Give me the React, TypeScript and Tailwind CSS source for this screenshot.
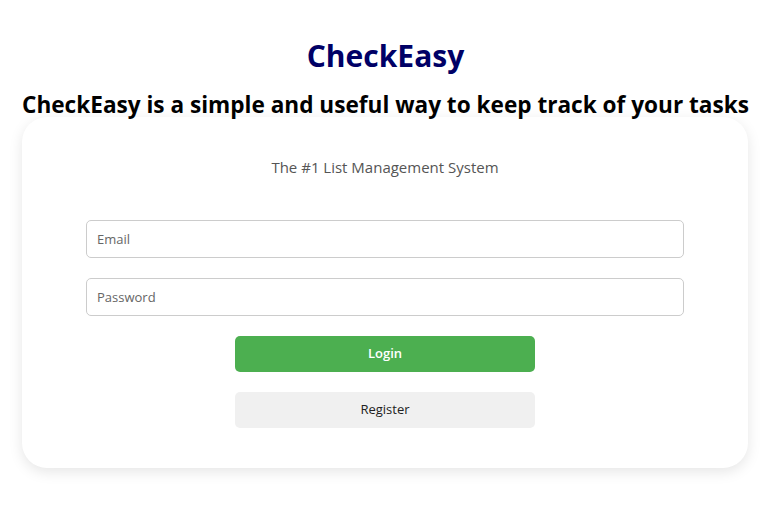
import React from 'react';

const App = () => {
  return (
    <div className="min-h-screen bg-white pt-[38px] text-center" style={{ fontFamily: '"Trebuchet MS", "Open Sans", sans-serif' }}>
      <h1 className="text-[30px] font-bold leading-[36px] text-[#000066]">CheckEasy</h1>
      <h2 className="mt-[17px] text-[22.6px] font-bold leading-[28px] text-black">
        CheckEasy is a simple and useful way to keep track of your tasks
      </h2>
      <div className="ml-[22px] mr-[23px] -mt-[2px] rounded-[25px] bg-white px-16 pb-10 pt-[40px] shadow-[0_4px_14px_rgba(0,0,0,0.1)]">
        <p className="text-[15px] leading-[20px] text-[#555]">The #1 List Management System</p>
        <div className="mt-[43px] flex flex-col gap-5">
          <input
            type="text"
            placeholder="Email"
            className="h-[38px] w-full rounded-[5px] border border-[#ccc] px-[10px] text-[13px] text-[#333] placeholder:text-[#666] outline-none"
          />
          <input
            type="password"
            placeholder="Password"
            className="h-[38px] w-full rounded-[5px] border border-[#ccc] px-[10px] text-[13px] text-[#333] placeholder:text-[#666] outline-none"
          />
        </div>
        <div className="mt-5 flex flex-col items-center gap-5">
          <button className="h-[36px] w-[300px] rounded-[5px] bg-[#4CAF50] text-[13px] font-semibold text-white">Login</button>
          <button className="h-[36px] w-[300px] rounded-[5px] bg-[#f0f0f0] text-[13px] text-[#222]">Register</button>
        </div>
      </div>
    </div>
  );
};

export default App;
